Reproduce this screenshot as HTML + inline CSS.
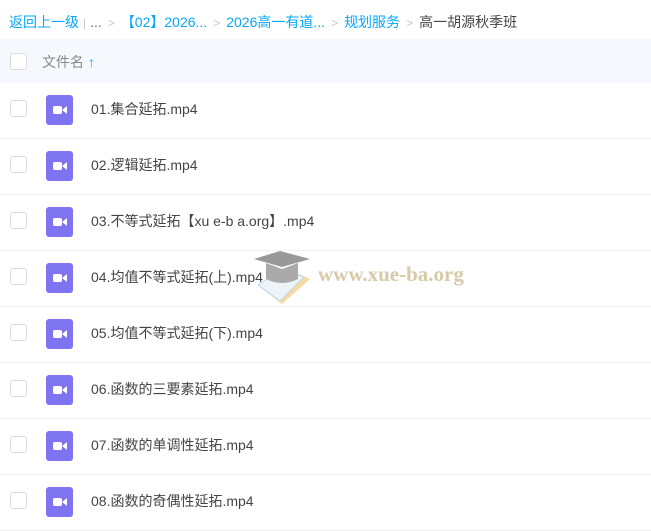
<!DOCTYPE html><html><head><meta charset="utf-8"><style>
body{margin:0;width:651px;height:523px;overflow:hidden;background:#fff;font-family:"Liberation Sans","Noto Sans CJK SC",sans-serif;font-size:14px;color:#333;position:relative}
.bc{position:absolute;top:12px;left:9px;font-size:14px;color:#06a7ff;white-space:nowrap}
.bc .g{color:#c8c8c8;margin:0 6px;font-size:12px}
.bc .d{color:#666}
.hd{position:absolute;top:39px;left:0;width:651px;height:44px;background:#f5f9fe}
.cb{position:absolute;left:10px;width:15px;height:15px;border:1px solid #dcdcdc;border-radius:3px;background:#fff}
.hd .cb{top:14px}
.hd span{position:absolute;left:42px;top:13px;color:#888;font-size:14px}
.row{position:absolute;left:0;width:651px;height:56px;border-bottom:1px solid #f0f0f0}
.row .cb{top:18px}
.ic{position:absolute;left:46px;top:13px;width:27px;height:30px;background:#7f74ef;border-radius:3px}
.ic:before{content:"";position:absolute;left:7px;top:11px;width:9px;height:8px;background:#fff;border-radius:2px}
.ic:after{content:"";position:absolute;left:16px;top:11px;border-right:5px solid #fff;border-top:4px solid transparent;border-bottom:4px solid transparent}
.row .t{position:absolute;left:91px;top:17px;font-size:14px;color:#444}
.wm{position:absolute;left:318px;top:262px;font-family:"Liberation Serif",serif;font-weight:bold;font-size:21px;color:#d8c9a9}
</style></head><body>
<div class="bc">返回上一级<span class="g" style="margin:0 4px">|</span><span class="d">...</span><span class="g">&gt;</span>【02】2026...<span class="g">&gt;</span>2026高一有道...<span class="g">&gt;</span>规划服务<span class="g">&gt;</span><span class="d" style="color:#444">高一胡源秋季班</span></div>
<div class="hd"><div class="cb"></div><span>文件名 <b style="color:#06a7ff">↑</b></span></div>
<div class="row" style="top:82px"><div class="cb"></div><div class="ic"></div><div class="t">01.集合延拓.mp4</div></div>
<div class="row" style="top:138px"><div class="cb"></div><div class="ic"></div><div class="t">02.逻辑延拓.mp4</div></div>
<div class="row" style="top:194px"><div class="cb"></div><div class="ic"></div><div class="t">03.不等式延拓【xu e-b a.org】.mp4</div></div>
<div class="row" style="top:250px"><div class="cb"></div><div class="ic"></div><div class="t">04.均值不等式延拓(上).mp4</div></div>
<div class="row" style="top:306px"><div class="cb"></div><div class="ic"></div><div class="t">05.均值不等式延拓(下).mp4</div></div>
<div class="row" style="top:362px"><div class="cb"></div><div class="ic"></div><div class="t">06.函数的三要素延拓.mp4</div></div>
<div class="row" style="top:418px"><div class="cb"></div><div class="ic"></div><div class="t">07.函数的单调性延拓.mp4</div></div>
<div class="row" style="top:474px"><div class="cb"></div><div class="ic"></div><div class="t">08.函数的奇偶性延拓.mp4</div></div>
<svg style="position:absolute;left:252px;top:249px" width="60" height="58"><path d="M8 38 L30 55 L58 30 L40 22 Z" fill="#f5d9a0"/><path d="M6 36 L28 52 L52 28 L30 20 Z" fill="#eef3f7" stroke="#b9d8ee"/><path d="M2 10 L28 2 L58 10 L30 18 Z" fill="#999"/><path d="M14 14 L14 30 Q30 38 46 30 L46 14 L30 20 Z" fill="#aaa"/></svg>
<div class="wm">www.xue-ba.org</div>
</body></html>
